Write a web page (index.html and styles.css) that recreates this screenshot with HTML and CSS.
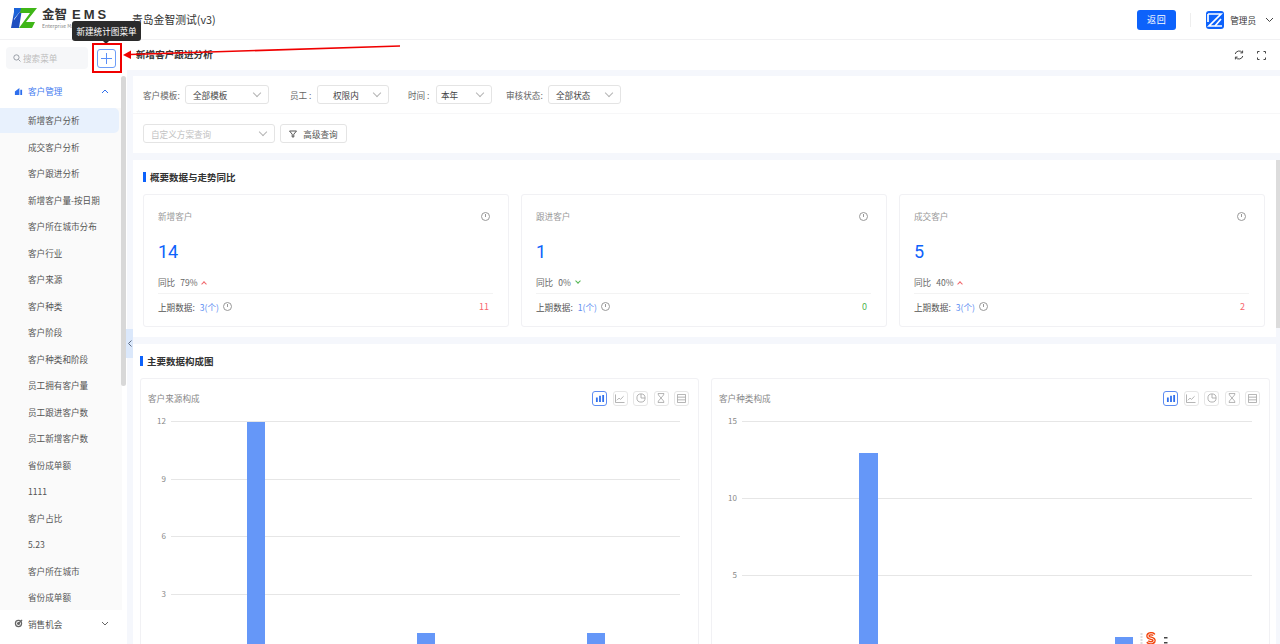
FILE: index.html
```html
<!DOCTYPE html>
<html lang="zh-CN">
<head>
  <meta charset="UTF-8">
  <title>新增客户跟进分析</title>
  <link rel="stylesheet" href="styles.css">
</head>
<body>
  <header class="topbar">
    <div class="logo">
      <svg class="logo-mark" width="26" height="20" viewBox="0 0 26 20">
        <path d="M3 0H12L3 11V0Z" fill="#1b63d8"/>
        <path d="M0 20L3 4V12L11 1L8 20H0Z" fill="#1f4fc0"/>
        <path d="M10 0H26L15 14H24L21 20H8L19 5H9L10 0Z" fill="#3fb617"/>
      </svg>
      <div class="logo-text">
        <div class="logo-name">金智<span class="logo-ems">EMS</span></div>
        <div class="logo-sub">Enterprise Management System</div>
      </div>
    </div>
    <div class="top-title">青岛金智测试(v3)</div>
    <div class="top-right">
      <button class="back-btn">返回</button>
      <span class="top-sep"></span>
      <span class="avatar">
        <svg width="18" height="18" viewBox="0 0 18 18" fill="none" stroke="#fff" stroke-width="1.7">
          <path d="M2 3H15L3 15H16"/>
          <path d="M2 3V11"/>
          <path d="M9 15L15 8"/>
        </svg>
      </span>
      <span class="user-name">管理员</span>
      <svg class="user-caret" width="9" height="6" viewBox="0 0 9 6" fill="none" stroke="#444" stroke-width="1"><path d="M1 1L4.5 4.5L8 1"/></svg>
    </div>
  </header>

  <div class="layout">
    <aside class="sidebar">
      <div class="search-row">
        <div class="search">
          <svg width="8" height="8" viewBox="0 0 10 10" fill="none" stroke="#8d939c" stroke-width="1.1"><circle cx="4.3" cy="4.3" r="3.3"/><path d="M6.8 6.8L9.3 9.3"/></svg>
          <span>搜索菜单</span>
        </div>
        <button class="add-btn">
          <svg width="11" height="11" viewBox="0 0 11 11" stroke="#5b8ff8" stroke-width="1"><path d="M5.5 0V11M0 5.5H11"/></svg>
        </button>
      </div>

      <div class="menu-group active">
        <svg width="9" height="9" viewBox="0 0 10 10" fill="#2f6fed"><path d="M1 9V5L6 1V9ZM7 3H9V9H7Z"/></svg>
        <span>客户管理</span>
        <svg class="group-caret" width="8" height="5" viewBox="0 0 8 5" fill="none" stroke="#2f6fed" stroke-width="1"><path d="M1 4L4 1L7 4"/></svg>
      </div>
      <ul class="menu-list">
        <li class="current">新增客户分析</li>
        <li>成交客户分析</li>
        <li>客户跟进分析</li>
        <li>新增客户量-按日期</li>
        <li>客户所在城市分布</li>
        <li>客户行业</li>
        <li>客户来源</li>
        <li>客户种类</li>
        <li>客户阶段</li>
        <li>客户种类和阶段</li>
        <li>员工拥有客户量</li>
        <li>员工跟进客户数</li>
        <li>员工新增客户数</li>
        <li>省份成单额</li>
        <li>1111</li>
        <li>客户占比</li>
        <li>5.23</li>
        <li>客户所在城市</li>
        <li>省份成单额</li>
      </ul>
      <div class="menu-group">
        <svg width="9" height="9" viewBox="0 0 10 10" fill="none" stroke="#666" stroke-width="1.4"><circle cx="5" cy="5" r="3.4"/><circle cx="5" cy="5" r="1" fill="#666"/><path d="M5 5L9 1"/></svg>
        <span>销售机会</span>
        <svg class="group-caret" width="8" height="5" viewBox="0 0 8 5" fill="none" stroke="#666" stroke-width="1"><path d="M1 1L4 4L7 1"/></svg>
      </div>
      <div class="side-scroll"></div>
    </aside>

    <div class="collapse-tab">
      <svg width="4" height="7" viewBox="0 0 4 7" fill="none" stroke="#5d6b82" stroke-width="1"><path d="M3.5 .5L.5 3.5L3.5 6.5"/></svg>
    </div>

    <main class="main">
      <div class="page-head">
        <span class="page-title">新增客户跟进分析</span>
        <div class="page-tools">
          <svg width="10" height="10" viewBox="0 0 10 10" fill="none" stroke="#444" stroke-width="1"><path d="M1.2 4A4 4 0 0 1 8.3 2.6M8.8 6A4 4 0 0 1 1.7 7.4"/><path d="M8.6 .6V2.9H6.4M1.4 9.4V7.1H3.6"/></svg>
          <svg width="9" height="9" viewBox="0 0 9 9" fill="none" stroke="#444" stroke-width="1"><path d="M.5 2.5V.5H2.5M6.5 .5H8.5V2.5M8.5 6.5V8.5H6.5M2.5 8.5H.5V6.5"/></svg>
        </div>
      </div>

      <section class="filters">
        <div class="filter-row first">
          <label class="f-label l-tpl">客户模板:</label>
          <div class="select s-tpl"><span>全部模板</span><i class="chev"></i></div>
          <label class="f-label l-emp">员工 :</label>
          <div class="select s-emp"><span>权限内</span><i class="chev"></i></div>
          <label class="f-label l-time">时间 :</label>
          <div class="select s-time"><span>本年</span><i class="chev"></i></div>
          <label class="f-label l-audit">审核状态:</label>
          <div class="select s-audit"><span>全部状态</span><i class="chev"></i></div>
        </div>
        <div class="filter-row second">
          <div class="select s-plan"><span>自定义方案查询</span><i class="chev"></i></div>
          <button class="adv-btn">
            <svg width="8" height="8" viewBox="0 0 8 8" fill="none" stroke="#555" stroke-width="1"><path d="M.5 1H7.5L4.8 4.2V7H3.2V4.2Z"/></svg>
            <span>高级查询</span>
          </button>
        </div>
      </section>

      <div class="panel-scroll">
        <section class="panel overview">
          <h3 class="section-title">概要数据与走势同比</h3>
          <div class="stat-grid">
            <div class="stat-card">
              <div class="stat-head"><span>新增客户</span><i class="help"></i></div>
              <div class="stat-num">14</div>
              <div class="stat-yoy">同比<span class="pct">79%</span><i class="arrow up"></i></div>
              <div class="stat-foot">上期数据:<a>3(个)</a><i class="help small"></i><b class="delta red">11</b></div>
            </div>
            <div class="stat-card">
              <div class="stat-head"><span>跟进客户</span><i class="help"></i></div>
              <div class="stat-num">1</div>
              <div class="stat-yoy">同比<span class="pct">0%</span><i class="arrow down"></i></div>
              <div class="stat-foot">上期数据:<a>1(个)</a><i class="help small"></i><b class="delta green">0</b></div>
            </div>
            <div class="stat-card">
              <div class="stat-head"><span>成交客户</span><i class="help"></i></div>
              <div class="stat-num">5</div>
              <div class="stat-yoy">同比<span class="pct">40%</span><i class="arrow up"></i></div>
              <div class="stat-foot">上期数据:<a>3(个)</a><i class="help small"></i><b class="delta red">2</b></div>
            </div>
          </div>
        </section>
        <div class="main-scroll"></div>
      </div>

      <section class="panel charts">
        <h3 class="section-title">主要数据构成图</h3>
        <div class="chart-grid">
          <div class="chart-card">
            <div class="chart-head">
              <span>客户来源构成</span>
              <div class="chart-tools">
                <span class="tool on"><svg width="10" height="9" viewBox="0 0 11 10" fill="#2f6fed"><path d="M1 4H3V9H1ZM4.5 2H6.5V9H4.5ZM8 1H10V9H8Z"/></svg></span>
                <span class="tool"><svg width="10" height="9" viewBox="0 0 11 10" fill="none" stroke="#aaa"><path d="M.5 .5V9.5H10.5M2 7L4.5 4.5L6 6L9.5 2.5"/></svg></span>
                <span class="tool"><svg width="10" height="10" viewBox="0 0 11 11" fill="none" stroke="#aaa"><circle cx="5.5" cy="5.5" r="4.5"/><path d="M5.5 1V5.5H10"/></svg></span>
                <span class="tool"><svg width="8" height="10" viewBox="0 0 9 11" fill="none" stroke="#aaa"><path d="M1 .5H8M1 10.5H8M1.5 .5V2L7.5 9V10.5M7.5 .5V2L1.5 9V10.5"/></svg></span>
                <span class="tool"><svg width="9" height="9" viewBox="0 0 10 10" fill="none" stroke="#aaa"><path d="M.5 .5H9.5V9.5H.5ZM.5 3.5H9.5M.5 6.5H9.5"/></svg></span>
              </div>
            </div>
            <svg class="plot" width="557" height="228" viewBox="0 -4 557 228">
              <g stroke="#e6e6e6"><path d="M30 .5H539M30 58.5H539M30 115.5H539M30 173.5H539"/></g>
              <g class="axis-text">
                <text x="25" y="3" text-anchor="end">12</text>
                <text x="25" y="61" text-anchor="end">9</text>
                <text x="25" y="118" text-anchor="end">6</text>
                <text x="25" y="176" text-anchor="end">3</text>
              </g>
              <g fill="#6597f8">
                <rect x="106" y="1" width="18" height="223"/>
                <rect x="276" y="212" width="18" height="12"/>
                <rect x="446" y="212" width="18" height="12"/>
              </g>
            </svg>
          </div>
          <div class="chart-card">
            <div class="chart-head">
              <span>客户种类构成</span>
              <div class="chart-tools">
                <span class="tool on"><svg width="10" height="9" viewBox="0 0 11 10" fill="#2f6fed"><path d="M1 4H3V9H1ZM4.5 2H6.5V9H4.5ZM8 1H10V9H8Z"/></svg></span>
                <span class="tool"><svg width="10" height="9" viewBox="0 0 11 10" fill="none" stroke="#aaa"><path d="M.5 .5V9.5H10.5M2 7L4.5 4.5L6 6L9.5 2.5"/></svg></span>
                <span class="tool"><svg width="10" height="10" viewBox="0 0 11 11" fill="none" stroke="#aaa"><circle cx="5.5" cy="5.5" r="4.5"/><path d="M5.5 1V5.5H10"/></svg></span>
                <span class="tool"><svg width="8" height="10" viewBox="0 0 9 11" fill="none" stroke="#aaa"><path d="M1 .5H8M1 10.5H8M1.5 .5V2L7.5 9V10.5M7.5 .5V2L1.5 9V10.5"/></svg></span>
                <span class="tool"><svg width="9" height="9" viewBox="0 0 10 10" fill="none" stroke="#aaa"><path d="M.5 .5H9.5V9.5H.5ZM.5 3.5H9.5M.5 6.5H9.5"/></svg></span>
              </div>
            </div>
            <svg class="plot" width="557" height="228" viewBox="0 -4 557 228">
              <g stroke="#e6e6e6"><path d="M30 .5H540M30 77.5H540M30 154.5H540"/></g>
              <g class="axis-text">
                <text x="25" y="3" text-anchor="end">15</text>
                <text x="25" y="80" text-anchor="end">10</text>
                <text x="25" y="157" text-anchor="end">5</text>
              </g>
              <g fill="#6597f8">
                <rect x="147" y="32" width="19" height="192"/>
                <rect x="403" y="216" width="18" height="8"/>
              </g>
            </svg>
          </div>
        </div>
      </section>
    </main>
  </div>

  <!-- annotation drawn on top of the screenshot -->
  <div class="tooltip">新建统计图菜单</div>
  <div class="red-box"></div>
  <svg class="red-arrow" width="290" height="20" viewBox="0 0 290 20">
    <path d="M277 1L7 9.5" stroke="#f00000" stroke-width="1.6"/>
    <path d="M0 10L8 5.5V14Z" fill="#f00000"/>
  </svg>
  <svg class="ime-icon" width="30" height="12" viewBox="0 0 30 12">
    <path d="M1.5 1V12" stroke="#dcdcdc" stroke-width="2" stroke-dasharray="2 1"/>
    <path d="M14 3C12.5 1 8 1.5 8 4C8 7 14 5.5 14 8.5C14 11 9.5 11.5 7.5 9.5" fill="none" stroke="#f2460f" stroke-width="3.6"/>
    <path d="M14 3C12.5 1 8 1.5 8 4C8 7 14 5.5 14 8.5C14 11 9.5 11.5 7.5 9.5" fill="none" stroke="#fff" stroke-width="1"/>
    <path d="M24 5H27.5V6.5H24ZM24 10H27.5V11.5H24Z" fill="#444"/>
  </svg>
</body>
</html>
```

FILE: styles.css
```css
* {
  box-sizing: border-box;
}

html, body {
  margin: 0;
  height: 644px;
  overflow: hidden;
}

body {
  position: relative;
  font-family: "Noto Sans CJK SC", "Noto Sans", sans-serif;
  font-size: 8.6px;
  color: #555;
  background: #fff;
}

button {
  font-family: inherit;
  padding: 0;
}

/* top bar */
.topbar {
  height: 40px;
  display: flex;
  align-items: center;
  border-bottom: 1px solid #f1f1f3;
}

.logo {
  width: 132px;
  padding-left: 11px;
  margin-top: -3px;
  display: flex;
  align-items: center;
  gap: 5px;
}

.logo-text {
  width: 67px;
  overflow: hidden;
  white-space: nowrap;
}

.logo-name {
  font-size: 12.5px;
  font-weight: 700;
  line-height: 14px;
  color: #333;
}

.logo-ems {
  margin-left: 5px;
  font-family: "Liberation Sans", sans-serif;
  font-size: 13px;
  letter-spacing: 3px;
}

.logo-sub {
  font-size: 5px;
  line-height: 8px;
  color: #888;
}

.top-title {
  font-size: 10.8px;
  color: #333;
  margin-top: -1px;
}

.top-right {
  margin-left: auto;
  padding-right: 6px;
  display: flex;
  align-items: center;
}

.back-btn {
  width: 39px;
  height: 20px;
  border: 0;
  border-radius: 3px;
  background: #0d62fb;
  color: #fff;
  font-size: 9px;
  letter-spacing: .6px;
}

.top-sep {
  width: 1px;
  height: 14px;
  margin: 0 15px 0 14px;
  background: #eee;
}

.avatar {
  width: 18px;
  height: 18px;
  border-radius: 3px;
  background: #0d62fb;
  display: flex;
}

.user-name {
  margin: 0 9px 0 6px;
  color: #333;
}

/* left side */
.layout {
  display: flex;
  height: 604px;
}

.sidebar {
  position: relative;
  width: 122px;
  flex: none;
  background: #fff;
}

.search-row {
  height: 36px;
  padding-top: 7px;
  display: flex;
  align-items: flex-start;
}

.search {
  width: 82px;
  height: 22px;
  margin-left: 6px;
  padding-left: 7px;
  display: flex;
  align-items: center;
  gap: 2px;
  border-radius: 4px;
  background: #f6f7f9;
  color: #bdbdbd;
}

.add-btn {
  width: 19px;
  height: 19px;
  margin: 2px 0 0 9px;
  display: flex;
  align-items: center;
  justify-content: center;
  background: #fff;
  border: 1px solid #6e9df7;
  border-radius: 3px;
}

.menu-group {
  height: 27px;
  padding-left: 14px;
  display: flex;
  align-items: center;
  gap: 5px;
  color: #555;
}

.menu-group.active {
  height: 30px;
  margin-bottom: 2px;
  color: #3f7bf0;
}

.group-caret {
  margin-left: auto;
  margin-right: 13px;
}

.menu-list {
  list-style: none;
  margin: 0;
  padding: 0;
  height: 502px;
  background: #fafafa;
}

.menu-list li {
  height: 26.5px;
  padding-left: 28px;
  line-height: 26px;
  color: #555;
  white-space: nowrap;
}

.menu-list li.current {
  width: 119px;
  height: 25px;
  background: #e8f1fd;
  border-radius: 0 5px 5px 0;
  line-height: 25px;
  margin-bottom: .5px;
}

.side-scroll {
  position: absolute;
  top: 36px;
  right: -4px;
  width: 5px;
  height: 310px;
  border-radius: 3px;
  background: #d8d8d8;
}

.collapse-tab {
  position: absolute;
  left: 126px;
  top: 329px;
  width: 7px;
  height: 29px;
  display: flex;
  align-items: center;
  justify-content: center;
  background: #dbe8fb;
}

/* main area */
.main {
  flex: 1;
  min-width: 0;
  margin-left: 5px;
  background: #f5f7fc;
  overflow: hidden;
}

.page-head {
  height: 30px;
  padding: 0 14px 0 9px;
  display: flex;
  align-items: center;
  justify-content: space-between;
  background: #fff;
}

.page-title {
  margin-top: -2px;
  font-size: 9.6px;
  font-weight: 700;
  color: #333;
}

.page-tools {
  display: flex;
  align-items: center;
  gap: 13px;
}

.filters {
  height: 77px;
  margin: 6px 0 7px 6px;
  background: #fff;
}

.filter-row {
  display: flex;
  align-items: center;
  padding-left: 10px;
}

.filter-row.first {
  height: 38px;
  border-bottom: 1px solid #f7f7f8;
}

.filter-row.second {
  height: 39px;
  gap: 5px;
}

.f-label {
  padding-top: 1px;
  color: #666;
  white-space: nowrap;
}

.select {
  position: relative;
  height: 19px;
  display: flex;
  align-items: center;
  padding-top: 1px;
  padding-left: 7px;
  background: #fff;
  border: 1px solid #e4e4e4;
  border-radius: 3px;
  color: #444;
}

.chev {
  position: absolute;
  right: 8px;
  top: 4px;
  width: 6px;
  height: 6px;
  border-right: 1px solid #b5b5b5;
  border-bottom: 1px solid #b5b5b5;
  transform: rotate(45deg);
}

.l-tpl { width: 42px; }
.s-tpl { width: 84px; }
.l-emp { margin-left: 21px; width: 27px; }
.s-emp { width: 72px; padding-left: 15px; }
.l-time { margin-left: 19px; width: 28px; }
.s-time { width: 56px; padding-left: 4px; }
.l-audit { margin-left: 14px; width: 42px; }
.s-audit { width: 73px; }
.s-plan { width: 132px; color: #c2c2c2; }

.adv-btn {
  width: 67px;
  height: 19px;
  display: flex;
  align-items: center;
  justify-content: center;
  gap: 6px;
  background: #fff;
  border: 1px solid #e4e4e4;
  border-radius: 3px;
  font-size: 8.6px;
  color: #555;
}

.panel-scroll {
  position: relative;
  margin-left: 6px;
  padding-right: 4px;
}

.main-scroll {
  position: absolute;
  top: 0;
  right: 0;
  width: 4px;
  height: 168px;
  background: #dcdcdc;
}

.panel {
  background: #fff;
}

.overview {
  height: 177px;
  padding: 0 11px 0 10px;
}

.section-title {
  position: relative;
  margin: 0;
  height: 34px;
  padding-left: 7px;
  font-size: 9.5px;
  font-weight: 700;
  line-height: 34px;
  color: #333;
}

.section-title::before {
  content: "";
  position: absolute;
  left: 0;
  top: 12px;
  width: 3px;
  height: 10px;
  background: #0d62fb;
}

.stat-grid {
  display: grid;
  grid-template-columns: repeat(3, 366px);
  gap: 12px;
}

.stat-card {
  height: 133px;
  padding: 15px 15px 0 14px;
  border: 1px solid #f1f1f4;
  border-radius: 3px;
}

.stat-head {
  display: flex;
  justify-content: space-between;
  align-items: center;
  height: 12px;
  padding-right: 3px;
  color: #999;
}

.help {
  position: relative;
  display: block;
  width: 9px;
  height: 9px;
  border: 1px solid #999;
  border-radius: 50%;
}

.help::after {
  content: "";
  position: absolute;
  left: 3px;
  top: 1px;
  width: 1px;
  height: 3px;
  background: #999;
}

.stat-num {
  margin-top: 18px;
  height: 24px;
  font-family: Roboto, sans-serif;
  font-size: 18px;
  line-height: 24px;
  color: #0d62fb;
}

.stat-yoy {
  margin-top: 9px;
  height: 18px;
  display: flex;
  align-items: center;
  color: #666;
}

.pct {
  margin-left: 5px;
  font-size: 8.5px;
}

.arrow {
  width: 4px;
  height: 4px;
  margin-left: 5px;
  transform: rotate(45deg);
}

.arrow.up {
  margin-top: 3px;
  border-left: 1px solid #f0656a;
  border-top: 1px solid #f0656a;
}

.arrow.down {
  margin-top: -2px;
  border-right: 1px solid #52b652;
  border-bottom: 1px solid #52b652;
}

.stat-foot {
  margin-top: 2px;
  height: 26px;
  padding-right: 4px;
  display: flex;
  align-items: center;
  border-top: 1px solid #f3f3f3;
  color: #555;
}

.stat-foot a {
  margin-left: 5px;
  color: #5e8df2;
}

.help.small {
  margin-left: 4px;
}

.delta {
  margin-left: auto;
  font-weight: 400;
  font-size: 9px;
}

.red { color: #f7666c; }
.green { color: #52b652; }

.charts {
  height: 300px;
  margin: 7px 4px 0 6px;
  padding: 0 0 0 7px;
}

.chart-grid {
  display: grid;
  grid-template-columns: repeat(2, 559px);
  gap: 12px;
}

.chart-card {
  height: 270px;
  border: 1px solid #f1f1f4;
  border-radius: 3px 3px 0 0;
}

.chart-head {
  height: 38px;
  padding: 0 9px 0 7px;
  display: flex;
  justify-content: space-between;
  align-items: center;
  color: #888;
}

.chart-tools {
  display: flex;
  gap: 5.5px;
}

.tool {
  width: 15px;
  height: 15px;
  display: flex;
  align-items: center;
  justify-content: center;
  border: 1px solid #e6e6e6;
  border-radius: 3px;
}

.tool.on {
  border-color: #5e8df2;
}

.plot {
  display: block;
}

.axis-text {
  font-size: 8px;
  fill: #888;
}

/* things lying over the page */
.tooltip {
  position: absolute;
  left: 72px;
  top: 21px;
  width: 69px;
  height: 20px;
  background: #2b2b2b;
  border-radius: 3px;
  color: #fff;
  line-height: 20px;
  text-align: center;
}

.tooltip::after {
  content: "";
  position: absolute;
  left: 31px;
  top: 20px;
  border: 3px solid transparent;
  border-top-color: #2b2b2b;
}

.red-box {
  position: absolute;
  left: 92px;
  top: 43px;
  width: 30px;
  height: 30px;
  border: 2px solid #f00000;
}

.red-arrow {
  position: absolute;
  left: 123px;
  top: 45px;
}

.ime-icon {
  position: absolute;
  left: 1140px;
  top: 632px;
}
```
